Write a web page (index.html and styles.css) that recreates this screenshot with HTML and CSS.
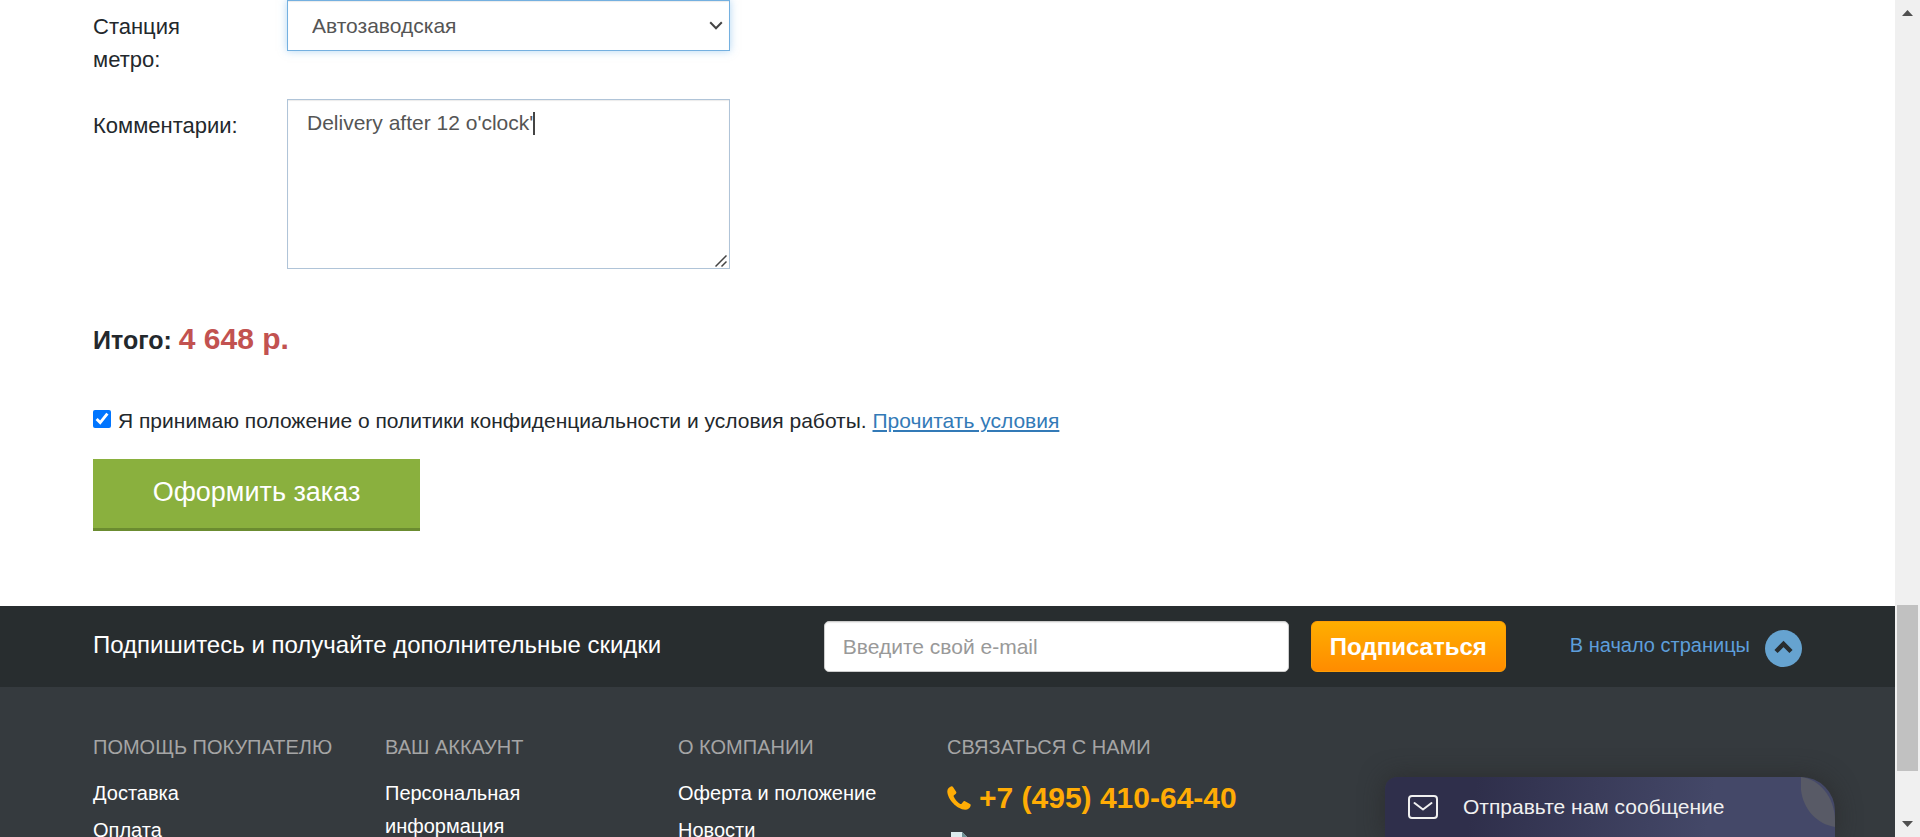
FILE: index.html
```
<!DOCTYPE html>
<html lang="ru">
<head>
<meta charset="utf-8">
<title>Оформление заказа</title>
<link rel="stylesheet" href="styles.css">
</head>
<body>
<div class="window">
  <div class="page">
    <main class="checkout">
      <form class="order-form">
        <div class="field">
          <label class="field-label" for="metro">Станция метро:</label>
          <div class="control-wrap">
            <select class="control select" id="metro"><option>Автозаводская</option></select>
            <svg class="select-arrow" viewBox="0 0 14 9" aria-hidden="true"><path d="M1.2 1.2 7 7.2l5.8-6" fill="none" stroke="currentColor" stroke-width="2"/></svg>
          </div>
        </div>
        <div class="field">
          <label class="field-label" for="comment">Комментарии:</label>
          <div class="control-wrap">
            <textarea class="control comment" id="comment">Delivery after 12 o'clock'</textarea>
            <span class="caret" aria-hidden="true"></span>
            <svg class="grip" viewBox="0 0 12 12" aria-hidden="true"><path d="M.500 11.500l11-11M6.500 11.500l5-5" stroke="#444" stroke-width="1.500" fill="none"/></svg>
          </div>
        </div>
        <p class="total">Итого: <span class="total-sum">4 648 р.</span></p>
        <div class="terms">
          <input class="terms-check" type="checkbox" id="terms" checked>
          <p class="terms-text"><label for="terms">Я принимаю положение о политики конфиденциальности и условия работы.</label> <a class="terms-link" href="#">Прочитать условия</a></p>
        </div>
        <button class="submit" type="button">Оформить заказ</button>
      </form>
    </main>
    <footer class="footer">
      <div class="subscribe">
        <label class="subscribe-title" for="email">Подпишитесь и получайте дополнительные скидки</label>
        <input class="subscribe-input" type="email" id="email" placeholder="Введите свой e-mail">
        <button class="subscribe-button" type="button">Подписаться</button>
        <a class="to-top" href="#">В начало страницы
          <svg class="to-top-icon" viewBox="0 0 37 37" aria-hidden="true"><circle cx="18.500" cy="18.500" r="18.500" fill="#66a3d0"/><path d="M11 21.500l7.500-7.500 7.500 7.500" fill="none" stroke="#282d2f" stroke-width="4.500"/></svg>
        </a>
      </div>
      <div class="footer-columns">
        <section>
          <h2 class="footer-title">Помощь покупателю</h2>
          <ul class="links"><li><a href="#">Доставка</a></li><li><a href="#">Оплата</a></li></ul>
        </section>
        <section>
          <h2 class="footer-title">Ваш аккаунт</h2>
          <ul class="links narrow"><li><a href="#">Персональная информация</a></li></ul>
        </section>
        <section>
          <h2 class="footer-title">О компании</h2>
          <ul class="links"><li><a href="#">Оферта и положение</a></li><li><a href="#">Новости</a></li></ul>
        </section>
        <section>
          <h2 class="footer-title">Связаться с нами</h2>
          <a class="phone" href="tel:+74954106440"><svg class="phone-icon" viewBox="0 0 24 24" aria-hidden="true"><path d="M4.500.3C2.500.8.300 2.800.300 5.300.300 13 10 23.700 18.200 23.700c2.800 0 5-2 5.500-4.300.1-.7-.1-1.100-.7-1.400l-5-2.700c-.7-.4-1.300-.2-1.800.4l-1.600 2c-.4.400-.9.500-1.400.2-2.900-1.800-5.100-4.300-6.500-7.400-.2-.5-.1-.9.300-1.200l1.900-1.600c.5-.5.600-1 .4-1.600L6 1C5.700.4 5.100.200 4.500.3z" fill="currentColor"/></svg>+7 (495) 410-64-40</a>
          <svg class="missing-image" viewBox="0 0 16 18" aria-hidden="true"><path d="M0 0h11l5 5v13H0z" fill="#dcebed"/><path d="M11 0v5h5z" fill="#6f9296"/></svg>
        </section>
      </div>
    </footer>
    <button class="chat" type="button">
      <svg class="chat-icon" viewBox="0 0 30 24" aria-hidden="true"><rect x="1" y="1" width="28" height="22" rx="3" fill="none" stroke="currentColor" stroke-width="2"/><path d="M6.500 8 15 14.500 23.500 8" fill="none" stroke="currentColor" stroke-width="2" stroke-linecap="round" stroke-linejoin="round"/></svg>
      <span>Отправьте нам сообщение</span>
      <svg class="chat-leaf" viewBox="0 0 34 50" aria-hidden="true"><path d="M0 0C18 2 34 20 34 44V50C12 46-3 26 0 0z" fill="#585a66"/></svg>
    </button>
  </div>
  <div class="scrollbar" aria-hidden="true">
    <svg class="scroll-arrow" viewBox="0 0 11 6"><path d="M5.500 0 11 6H0z" fill="#505050"/></svg>
    <div class="scroll-track"><div class="scroll-thumb"></div></div>
    <svg class="scroll-arrow" viewBox="0 0 11 6"><path d="M0 0h11L5.500 6z" fill="#505050"/></svg>
  </div>
</div>
</body>
</html>
```
FILE: styles.css
```
* { box-sizing: border-box; }

body {
  margin: 0;
  font-family: Arial, "Liberation Sans", sans-serif;
  font-size: 20px;
  color: #23282c;
  background: #fff;
}

button, input, select, textarea { font-family: inherit; }

.window { display: flex; height: 100vh; overflow: hidden; }
.page { position: relative; flex: 1; min-width: 0; overflow: hidden; }

.checkout { padding: 0 93px 75px; }
.field { display: flex; align-items: flex-start; margin-bottom: 23px; }
.field-label {
  width: 194px;
  padding: 10px 44px 0 0;
  font-size: 22px;
  line-height: 33px;
}
.control {
  display: block;
  width: 443px;
  border: 1px solid #b0c4d8;
  border-radius: 0;
  outline: 0;
  background: #fff;
  color: #555;
  font-size: 21px;
  line-height: 28px;
  box-shadow: inset 0 1px 1px rgba(0, 0, 0, .08);
}
.control-wrap { position: relative; }
.select {
  height: 51px;
  padding: 0 24px;
  border-color: #74b0e0;
  appearance: none;
  box-shadow: inset 0 1px 1px rgba(0, 0, 0, .08), 0 0 8px rgba(102, 175, 233, .5);
}
.select-arrow {
  position: absolute;
  right: 7px;
  top: 21px;
  width: 14px;
  height: 9px;
  color: #444;
  pointer-events: none;
}
.comment { height: 170px; padding: 9px 19px; resize: none; }
.caret {
  position: absolute;
  left: 246px;
  top: 13px;
  width: 2px;
  height: 23px;
  background: #444;
}
.grip { position: absolute; right: 3px; bottom: 2px; width: 12px; height: 12px; }

.total { margin: 50px 0 46px; font-size: 25px; line-height: 40px; font-weight: bold; }
.total-sum { font-size: 30px; color: #c25250; }

.terms { display: flex; align-items: center; gap: 7px; }
.terms-check { width: 18px; height: 18px; margin: 0 0 4px; accent-color: #0075ff; }
.terms-text { margin: 0; font-size: 21px; line-height: 30px; }
.terms-link { color: #337ab7; text-decoration: underline; }

.submit {
  display: block;
  min-width: 327px;
  height: 72px;
  margin-top: 23px;
  padding: 0 48px 3px;
  border: 0;
  border-bottom: 3px solid #6b8c30;
  background: #8ab03e;
  color: #fff;
  font-size: 27px;
}

.footer { background: #353a3e; }
.subscribe {
  display: flex;
  align-items: center;
  padding: 15px 93px;
  background: #282d2f;
}
.subscribe-title { flex: 1; padding-bottom: 3px; color: #fff; font-size: 24px; line-height: 36px; }
.subscribe-input {
  width: 465px;
  height: 51px;
  margin-right: 22px;
  padding: 0 18px;
  border: 1px solid #ccc;
  border-radius: 5px;
  background: #fff;
  font-size: 21px;
  box-shadow: inset 0 1px 1px rgba(0, 0, 0, .08);
}
.subscribe-input::placeholder { color: #999; }
.subscribe-button {
  width: 195px;
  height: 51px;
  padding: 0;
  border: 1px solid #ff9e05;
  border-radius: 6px;
  background: linear-gradient(#ffae00, #ff8c00);
  color: #fff;
  font-size: 24px;
  font-weight: bold;
}
.to-top {
  display: flex;
  align-items: flex-start;
  gap: 15px;
  margin-left: 64px;
  padding-top: 3px;
  color: #5d9edb;
  line-height: 30px;
  text-decoration: none;
  white-space: nowrap;
}
.to-top-icon { width: 37px; height: 37px; }

.footer-columns {
  display: grid;
  grid-template-columns: 292fr 293fr 269fr 855fr;
  min-height: 240px;
  padding: 45px 93px 0;
}
.footer-title {
  margin: 0 0 15px;
  color: #a5a5a5;
  font-size: 20px;
  font-weight: normal;
  line-height: 30px;
  text-transform: uppercase;
  white-space: nowrap;
}
.links { margin: 0; padding: 0; list-style: none; }
.links li { margin-bottom: 4px; line-height: 33px; }
.links a { color: #fff; text-decoration: none; }
.narrow { width: 200px; }
.phone {
  display: flex;
  align-items: center;
  gap: 8px;
  color: #ffac05;
  font-size: 30px;
  font-weight: bold;
  line-height: 42px;
  text-decoration: none;
}
.phone-icon { width: 24px; height: 24px; }
.missing-image { display: block; width: 16px; height: 18px; margin: 13px 0 0 4px; }

.chat {
  position: absolute;
  right: 60px;
  bottom: 0;
  display: flex;
  align-items: center;
  gap: 25px;
  width: 450px;
  height: 60px;
  padding: 0 23px;
  border: 0;
  border-radius: 12px 34px 0 0;
  overflow: hidden;
  background: linear-gradient(100deg, #2f2f4b 20%, #444868 72%);
  box-shadow: 0 0 24px rgba(40, 40, 40, .7);
  color: #f0f0f0;
  font-size: 21px;
}
.chat-icon { width: 30px; height: 24px; }
.chat-leaf { position: absolute; right: 0; top: 0; width: 34px; height: 50px; }

.scrollbar {
  display: flex;
  flex-direction: column;
  align-items: center;
  width: 25px;
  padding: 10px 0;
  background: #f0f0f0;
}
.scroll-arrow { width: 11px; height: 6px; }
.scroll-track { display: flex; flex: 1; flex-direction: column; justify-content: flex-end; padding-bottom: 50px; }
.scroll-thumb { width: 21px; height: 166px; background: #c1c1c1; }
```
